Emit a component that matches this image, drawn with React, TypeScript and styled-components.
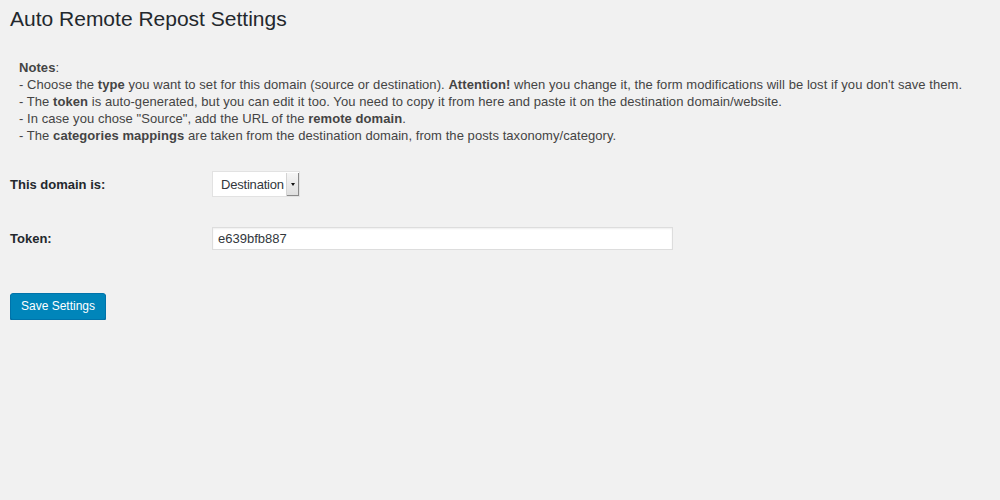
import React from "react";
import styled, { createGlobalStyle } from "styled-components";

const colors = {
  page: "#f1f1f1",
  title: "#23282d",
  text: "#444444",
  border: "#dddddd",
  input: "#32373c",
  primary: "#0085ba",
  primaryDark: "#0073aa",
};

const GlobalStyle = createGlobalStyle`
  html, body {
    margin: 0;
    padding: 0;
    background: ${colors.page};
    font-family: "Liberation Sans", Arial, sans-serif;
    font-size: 13px;
    color: ${colors.text};
  }
`;

export default function App() {
  return (
    <>
      <GlobalStyle />
      <Wrapper>
        <Title>Auto Remote Repost Settings</Title>
        <Notes>
          <NoteLine>
            <b>Notes</b>:
          </NoteLine>
          <NoteLine>
            - Choose the <b>type</b> you want to set for this domain (source or
            destination). <b>Attention!</b> when you change it, the form
            modifications will be lost if you don't save them.
          </NoteLine>
          <NoteLine>
            - The <b>token</b> is auto-generated, but you can edit it too. You
            need to copy it from here and paste it on the destination
            domain/website.
          </NoteLine>
          <NoteLine>
            - In case you chose "Source", add the URL of the{" "}
            <b>remote domain</b>.
          </NoteLine>
          <NoteLine>
            - The <b>categories mappings</b> are taken from the destination
            domain, from the posts taxonomy/category.
          </NoteLine>
        </Notes>
        <Form>
          <FieldRow height={26}>
            <Label>This domain is:</Label>
            <Select>
              <SelectValue>Destination</SelectValue>
              <SelectArrow>
                <Caret />
              </SelectArrow>
            </Select>
          </FieldRow>
          <FieldRow height={23}>
            <Label>Token:</Label>
            <TextInput defaultValue="e639bfb887" />
          </FieldRow>
        </Form>
        <SaveButton type="button">Save Settings</SaveButton>
      </Wrapper>
    </>
  );
}

const Wrapper = styled.div`
  padding: 0 10px;
`;

const Title = styled.h1`
  margin: 0;
  padding-top: 5px;
  font-size: 21px;
  font-weight: 400;
  line-height: 28px;
  color: ${colors.title};
`;

const Notes = styled.div`
  margin-top: 26px;
  padding-left: 9px;
  line-height: 17px;
  letter-spacing: 0.06px;
`;

const NoteLine = styled.div`
  white-space: nowrap;
  b {
    font-weight: 700;
  }
`;

const Form = styled.div`
  display: flex;
  flex-direction: column;
  gap: 30px;
  margin-top: 27px;
`;

const FieldRow = styled.div<{ height: number }>`
  display: flex;
  align-items: center;
  height: ${(p) => p.height}px;
`;

const Label = styled.div`
  width: 202px;
  flex: none;
  font-weight: 700;
  color: ${colors.title};
`;

const Select = styled.div`
  display: flex;
  align-items: stretch;
  width: 88px;
  height: 26px;
  box-sizing: border-box;
  background: #fff;
  border: 1px solid #e2e2e2;
`;

const SelectValue = styled.div`
  flex: 1;
  display: flex;
  align-items: center;
  padding-left: 8px;
  letter-spacing: -0.2px;
  color: ${colors.input};
`;

const SelectArrow = styled.div`
  width: 12px;
  margin: 1px 0 0;
  display: flex;
  align-items: center;
  justify-content: center;
  background: linear-gradient(#f6f6f6, #dedede);
  border-left: 1px solid #d4d4d4;
  box-shadow: inset -1px -1px 0 #8a8a8a;
`;

const Caret = styled.span`
  width: 0;
  height: 0;
  margin-right: 1px;
  border-left: 2px solid transparent;
  border-right: 2px solid transparent;
  border-top: 3px solid #111;
`;

const TextInput = styled.input`
  width: 461px;
  height: 23px;
  box-sizing: border-box;
  padding: 0 5px;
  border: 1px solid ${colors.border};
  box-shadow: inset 0 1px 2px rgba(0, 0, 0, 0.07);
  background: #fff;
  font-family: "Liberation Sans", Arial, sans-serif;
  font-size: 13px;
  color: ${colors.input};
  outline: none;
`;

const SaveButton = styled.button`
  display: block;
  margin-top: 43px;
  height: 27px;
  padding: 0 10px 1px;
  background: ${colors.primary};
  border: 1px solid ${colors.primaryDark};
  border-radius: 3px;
  box-shadow: 0 1px 0 #006799;
  color: #fff;
  font-family: "Liberation Sans", Arial, sans-serif;
  font-size: 12px;
  line-height: 24px;
  cursor: pointer;
`;
